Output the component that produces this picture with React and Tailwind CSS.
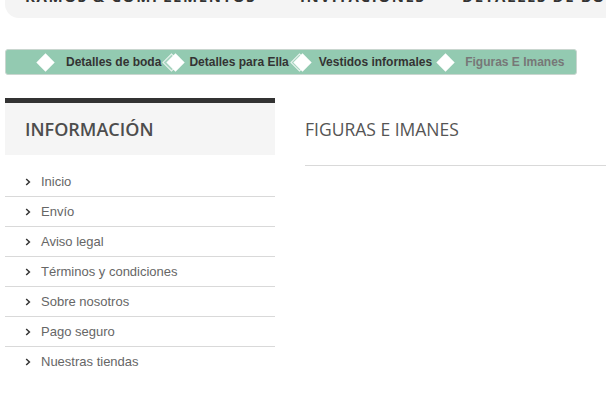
import React from "react";

const Diamond = ({ sep }) => (
  <div className="relative w-[18px] h-[18px] shrink-0">
    {sep && (
      <div className="absolute left-[-1px] top-[2.5px] w-[13px] h-[13px] rotate-45 border border-[#e8f3ee] bg-[#a9d5c1]" />
    )}
    <div className="absolute left-[2.5px] top-[2.5px] w-[13px] h-[13px] rotate-45 bg-white" />
  </div>
);

const Chevron = () => (
  <svg width="6" height="8" viewBox="0 0 6 8" className="shrink-0">
    <path d="M1.2 1 L4.4 4 L1.2 7" fill="none" stroke="#333" strokeWidth="1.5" />
  </svg>
);

export default function App() {
  const items = [
    "Inicio",
    "Envío",
    "Aviso legal",
    "Términos y condiciones",
    "Sobre nosotros",
    "Pago seguro",
    "Nuestras tiendas",
  ];
  return (
    <div className="w-[606px] h-[395px] bg-white overflow-hidden" style={{ fontFamily: "Arial, 'Liberation Sans', sans-serif" }}>
      {/* top nav */}
      <div className="ml-[5px] h-[18px] bg-[#f4f4f4] rounded-bl-[14px] overflow-hidden flex items-start">
        <div className="flex -mt-[12px] text-[15px] leading-[16px] font-bold uppercase tracking-[1.6px] text-[#333] whitespace-nowrap" style={{ fontFamily: "'Open Sans', sans-serif" }}>
          <span className="ml-[20px] w-[275px]">Ramos &amp; Complementos</span>
          <span className="w-[162px]">Invitaciones</span>
          <span>Detalles de boda</span>
        </div>
      </div>

      {/* breadcrumb */}
      <div className="mt-[31px] ml-[5px] w-[572px] h-[26px] bg-[#93cab1] border border-[#c9d6cf] rounded-[3px] flex items-center pl-[30px] text-[12px] font-bold text-[#333] whitespace-nowrap">
        <Diamond />
        <span className="ml-[12px]">Detalles de boda</span>
        <div className="mx-[5px]"><Diamond sep /></div>
        <span>Detalles para Ella</span>
        <div className="ml-[5px] mr-[7px]"><Diamond sep /></div>
        <span>Vestidos informales</span>
        <div className="ml-[4px] mr-[11px]"><Diamond /></div>
        <span className="text-[#777]">Figuras E Imanes</span>
      </div>

      {/* main */}
      <div className="mt-[23px] ml-[5px] flex">
        <div className="w-[270px] shrink-0">
          <div className="border-t-[5px] border-[#333] bg-[#f5f5f5] h-[57px] flex items-center pl-[20px]">
            <span className="text-[18px] font-semibold text-[#4d4d4d]" style={{ fontFamily: "'Open Sans', sans-serif" }}>INFORMACIÓN</span>
          </div>
          <ul className="pt-[12px]">
            {items.map((t, i) => (
              <li key={t} className={`h-[30px] flex items-center pl-[20px] gap-[10px] text-[13px] text-[#666] ${i < items.length - 1 ? "border-b border-[#d9d9d9]" : ""}`}>
                <Chevron />
                <span>{t}</span>
              </li>
            ))}
          </ul>
        </div>
        <div className="ml-[30px] flex-1">
          <div className="pt-[19px] pb-[24px] border-b border-[#d9d9d9]">
            <h1 className="text-[17.5px] leading-[24px] font-medium text-[#555]" style={{ fontFamily: "'Open Sans', sans-serif" }}>FIGURAS E IMANES</h1>
          </div>
        </div>
      </div>
    </div>
  );
}
